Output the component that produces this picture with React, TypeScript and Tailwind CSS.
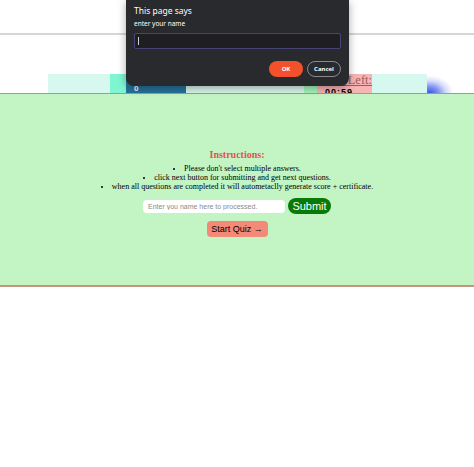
import React from 'react';

const serif = { fontFamily: '"Liberation Serif", "Times New Roman", serif' };

function PromptDialog() {
  return (
    <div className="absolute left-[126px] top-0 z-20 flex h-[86px] w-[223px] flex-col rounded-b-[8px] bg-[#292a2d] px-[8px] shadow-[0_2px_8px_rgba(0,0,0,0.35)] font-['Noto_Sans',sans-serif] text-white">
      <div className="mt-[4px] text-[8.5px] leading-[14px]">This page says</div>
      <div className="mt-[1px] text-[6.5px] leading-[10px]">enter your name</div>
      <div className="mt-[4px] flex h-[16px] items-center rounded-[2px] border border-[#4a4378] bg-[#1f1f23] px-[3px]">
        <span className="h-[8px] w-px bg-[#d0d0d0]" />
      </div>
      <div className="mt-[12px] flex justify-end gap-[4px]">
        <button className="flex h-[16px] w-[34px] items-center justify-center rounded-full bg-[#f2512b] text-[6px] font-bold text-white">
          OK
        </button>
        <button className="flex h-[16px] w-[34px] items-center justify-center rounded-full border border-[#8a8a8e] text-[6px] font-bold text-white">
          Cancel
        </button>
      </div>
    </div>
  );
}

function TopStrip() {
  return (
    <div className="flex">
      <div className="ml-[48px] flex h-[19px] w-[379px] overflow-hidden bg-[#d6f8ee]">
        <div className="w-[62px]" />
        <div className="w-[16px] bg-[#7ff5d1]" />
        <div className="flex w-[60px] items-end bg-[#26719b] px-[8px] text-[8px] font-bold leading-[8px] text-white font-['Liberation_Sans',sans-serif]">
          0
        </div>
        <div className="w-[118px] bg-[#d8f6ea]" />
        <div className="w-[13px] bg-[#a4f4ba]" />
        <div className="flex w-[55px] flex-col bg-[#f6b4b4]">
          <span className="self-end whitespace-nowrap text-[12.5px] leading-[12px] text-[#a05a5a] underline" style={serif}>
            Time Left:
          </span>
          <span className="pl-[8px] text-[9px] font-bold leading-[12px] tracking-[1px] text-black font-['Liberation_Sans',sans-serif]">
            00:59
          </span>
        </div>
        <div className="w-[55px]" />
      </div>
      <div className="mt-[2px] h-[17px] w-[26px] bg-[radial-gradient(ellipse_at_10%_100%,#3a55e8_0%,#7d90ee_25%,#d6dcfa_50%,transparent_72%)]" />
    </div>
  );
}

function InstructionsPanel() {
  return (
    <div className="flex h-[194px] flex-col items-center border-t border-b-2 border-t-[#e2806e] border-b-[#c8937f] bg-[#c3f4c3] pt-[55px]">
      <h2 className="text-[10px] font-bold leading-[12px] text-[#e0534f]" style={serif}>
        Instructions:
      </h2>
      <ul className="mt-[3px] list-inside list-disc text-center text-[8px] leading-[9px] text-black" style={serif}>
        <li>Please don't select multiple answers.</li>
        <li>click next button for submitting and get next questions.</li>
        <li>when all questions are completed it will autometaclly generate score + certificate.</li>
      </ul>
      <div className="mt-[7px] flex items-center gap-[3px] font-['Liberation_Sans',sans-serif]">
        <input
          placeholder="Enter you name here to processed."
          className="h-[13px] w-[142px] rounded-[4px] bg-white px-[5px] text-[7px] text-black outline-none placeholder:text-[#8a8a8a]"
        />
        <button className="h-[16px] w-[43px] rounded-full bg-[#087a08] text-[11px] leading-[16px] text-white">
          Submit
        </button>
      </div>
      <button className="mt-[7px] h-[16px] w-[61px] rounded-[4px] bg-[#f28a77] text-[9px] leading-[16px] text-black font-['Liberation_Sans',sans-serif]">
        Start Quiz →
      </button>
    </div>
  );
}

export default function App() {
  return (
    <div className="relative h-[467px] w-full overflow-hidden bg-white">
      <PromptDialog />
      <div className="h-[35px] border-b-2 border-[#d6d6d6]" />
      <div className="mt-[39px]">
        <TopStrip />
      </div>
      <InstructionsPanel />
    </div>
  );
}
